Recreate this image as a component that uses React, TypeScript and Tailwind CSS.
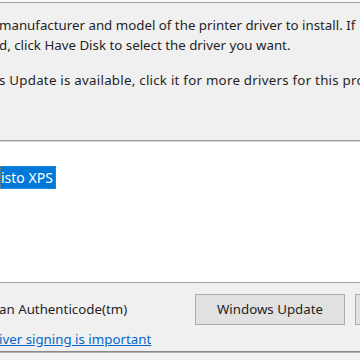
import React from "react";

export default function App() {
  const font = { fontFamily: '"Noto Sans", "Open Sans", sans-serif' };
  return (
    <div
      className="w-[360px] h-[360px] overflow-hidden bg-white flex flex-col text-[13.3px] text-[#1f1f1f]"
      style={font}
    >
      <div className="h-[2px] bg-[#f9f9f9] shrink-0" />
      <div className="h-[1px] bg-[#a0a0a0] shrink-0" />
      <div className="h-[137px] bg-[#f0f0f0] shrink-0 pt-[12px] leading-[20px] whitespace-nowrap overflow-hidden">
        <div className="ml-[-1px]">manufacturer and model of the printer driver to install. If</div>
        <div className="ml-[-1px]">d, click Have Disk to select the driver you want.</div>
        <div className="ml-[-1px] mt-[15px] tracking-[0.25px]">s Update is available, click it for more drivers for this proc</div>
      </div>
      <div className="h-[1px] bg-[#a0a0a0] shrink-0" />
      <div className="h-[1px] bg-[#d4d4d4] shrink-0" />
      <div className="h-[140px] bg-white shrink-0 pt-[24px]">
        <div className="w-[56px] h-[23px] bg-[#0078d7] border border-dotted border-[#9a7f5a] text-white text-[14px] leading-[21px] whitespace-nowrap overflow-hidden">
          <span>isto XPS</span>
        </div>
      </div>
      <div className="h-[1px] bg-[#a0a0a0] shrink-0" />
      <div className="h-[68px] bg-[#f0f0f0] shrink-0 flex flex-col overflow-hidden">
        <div className="flex items-center mt-[11px] h-[31px]">
          <div className="w-[196px] shrink-0 whitespace-nowrap ml-[-1px]">an Authenticode(tm)</div>
          <div className="w-[150px] shrink-0 h-[31px] bg-[#e1e1e1] border border-[#adadad] flex items-center justify-center">
            Windows Update
          </div>
          <div className="ml-[10px] w-[40px] shrink-0 h-[31px] bg-[#e1e1e1] border border-[#adadad]" />
        </div>
        <div className="mt-[4px] leading-[20px] whitespace-nowrap ml-[-1px]">
          <a className="text-[#0066cc] underline">iver signing is important</a>
        </div>
      </div>
      <div className="h-[1px] bg-[#8a8a8a] shrink-0" />
      <div className="h-[1px] bg-[#b0b0b0] shrink-0" />
      <div className="flex-1 bg-[#f3f3f3]" />
    </div>
  );
}
